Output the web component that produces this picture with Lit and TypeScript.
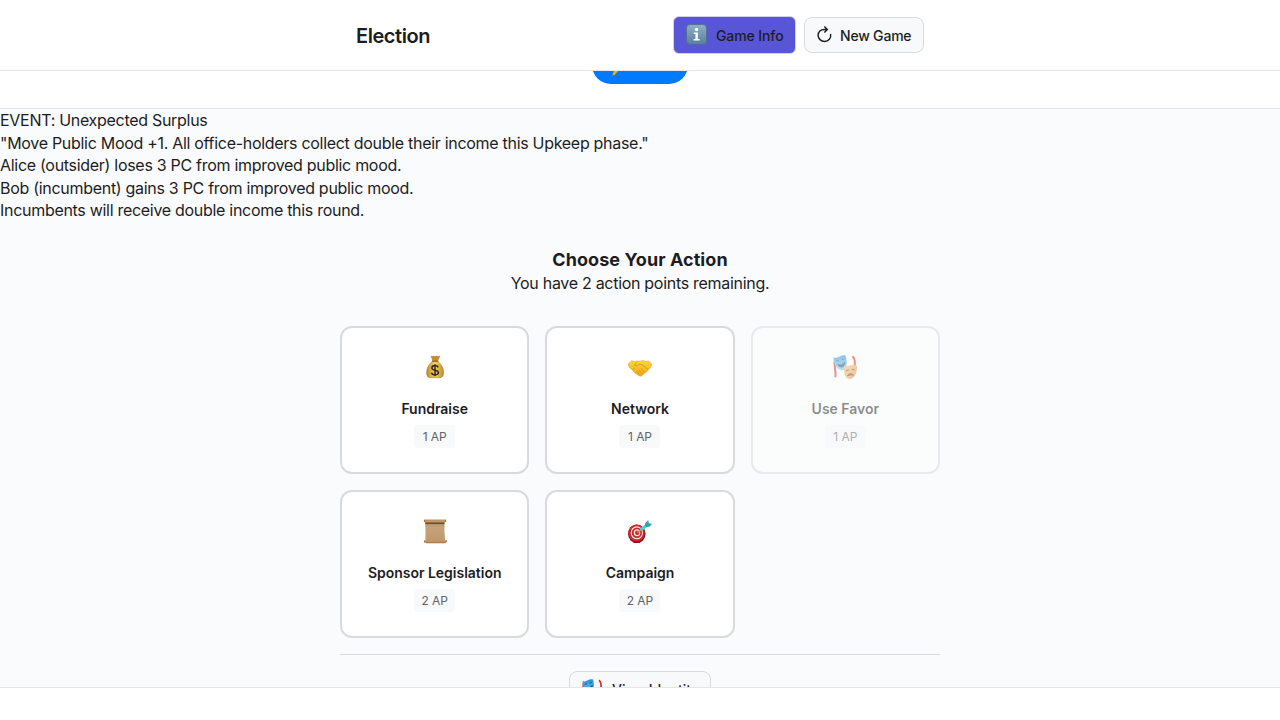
import { LitElement, html, css, svg, TemplateResult } from "lit";
import { customElement, property } from "lit/decorators.js";

const gradients = svg`<defs>
  <linearGradient id="gold" x1="0" x2="1"><stop offset="0" stop-color="#b98a26"/><stop offset=".5" stop-color="#f6d662"/><stop offset="1" stop-color="#bd8b2a"/></linearGradient>
  <linearGradient id="hand" x1="0" y1="0" x2="0" y2="1"><stop offset="0" stop-color="#ffd83a"/><stop offset="1" stop-color="#f0a818"/></linearGradient>
  <linearGradient id="mask1" x1="0" y1="0" x2="0" y2="1"><stop offset="0" stop-color="#1f8fdc"/><stop offset="1" stop-color="#7cc6ee"/></linearGradient>
  <linearGradient id="mask2" x1="0" y1="0" x2="1" y2="1"><stop offset="0" stop-color="#f8bd68"/><stop offset="1" stop-color="#d98a3c"/></linearGradient>
  <linearGradient id="paper" x1="0" y1="0" x2="0" y2="1"><stop offset="0" stop-color="#a98559"/><stop offset=".3" stop-color="#c5a278"/><stop offset="1" stop-color="#bf996c"/></linearGradient>
  <linearGradient id="info" x1="0" y1="0" x2="0" y2="1"><stop offset="0" stop-color="#8fb0c6"/><stop offset="1" stop-color="#587f9e"/></linearGradient>
</defs>`;

const icons: Record<string, TemplateResult> = {
  bag: svg`<path d="M7.6 .8Q9 1.8 10 .7Q12 1.6 13.5 .8Q15 1.7 17.4 .8L14.8 6.2H9.6Z" fill="#c4902f"/>
    <path d="M9.4 6.4H14.8C18.8 9.6 20.8 13.6 20.6 18.2C20.5 21.2 19 22.6 16.6 22.7H7.6C5 22.7 3.7 21.2 3.6 18.2C3.5 13.6 5.4 9.6 9.4 6.4Z" fill="url(#gold)" stroke="#9a6f22" stroke-width=".5"/>
    <path d="M9 6.2H15.3" stroke="#8a5e1a" stroke-width="1.1"/>
    <path d="M15.2 12.4C14.6 11 13.4 10.6 12 10.6C10.2 10.6 8.9 11.6 8.9 13C8.9 16.2 15.4 14.4 15.4 17.6C15.4 19 14 19.9 12.1 19.9C10.3 19.9 9 19.3 8.5 17.8M12 9.3V21.2" fill="none" stroke="#302b1e" stroke-width="1.5"/>`,
  hands: svg`<path d="M.2 9L3.7 5.6Q6.2 7.2 8.8 6L11.7 6.2L15.3 5.5Q18 7.2 20.7 6L23.8 9.2L22.3 12.7Q19.6 16.4 16.6 18.3L13.4 21Q12 21.5 10.7 20.4L7.2 18.2L4.2 14.8L1.3 12.6Z" fill="url(#hand)" stroke="#d99a17" stroke-width=".5"/>
    <path d="M8.8 6.8L6.6 10.3Q8.2 12 11.2 9.3L14 9.6L20 14.4M12.8 13L16.4 17M10.6 14.8L14 18.8M8.6 16.4L11 19.2M4.6 14.6L7 12.9" fill="none" stroke="#d08a10" stroke-width=".7"/>`,
  masks: svg`<path d="M1.9 4C.3 11 3.6 16 2.3 22.2" fill="none" stroke="#cf2f22" stroke-width="2"/>
    <path d="M19.6 1.2C23.6 5 20.7 9 22.3 14" fill="none" stroke="#cf2f22" stroke-width="2"/>
    <path d="M.8 2.2Q3 3.4 6 1.8Q10 -.4 12.6 .6C13.6 4.6 14.5 9 12.9 13Q10.8 16.6 7 14.9C3 13 .6 8 .8 2.2Z" fill="url(#mask1)"/>
    <path d="M3 6.2L5.7 5.4M8.8 4.8L11.4 3.8M4.6 9.4Q9 11.3 11.8 7.3Q11.6 11.8 8.5 12.1Q6 12.1 4.6 9.4Z" fill="#15557e" stroke="#15446b" stroke-width=".8"/>
    <path d="M11.1 11Q13.5 12 17 10.3Q21 9.1 23.9 10.9C24.1 16 22.9 20.6 19.7 23Q16.7 25.2 13.5 22.8C11.1 20 10.6 15.6 11.1 11Z" fill="url(#mask2)"/>
    <path d="M13 15.7L15.8 14.8M18.8 14.2L21.7 14.9M14.3 20.9Q17 16.8 20.3 20.1Q17.3 19.3 14.3 20.9Z" fill="#6f3d17" stroke="#6f3d17" stroke-width="1"/>`,
  scroll: svg`<path d="M2 2H21.6Q21 12 22.2 22.5H2.3Q3 12 2 2Z" fill="url(#paper)"/>
    <path d="M2.3 4.2H21.4" stroke="#674827" stroke-width="1.5"/><rect x="1" y=".4" width="21.8" height="2.9" rx=".8" fill="#bd9567"/>
    <rect x="1.2" y="21.4" width="22.2" height="2.4" rx=".8" fill="#c2935e"/><path d="M3 23.8H22.4" stroke="#76502b" stroke-width=".7"/>
    <path d="M1.4 .8V3M22.6 .8V3M1.6 21.5V23.5M23.2 21V23.3" stroke="#b8651e" stroke-width="1"/>`,
  target: svg`<ellipse cx="8.8" cy="14.8" rx="8.8" ry="9.3" fill="#8f1219"/><ellipse cx="8.5" cy="14" rx="8.2" ry="8.6" fill="#cf2631"/>
    <ellipse cx="8.8" cy="13.8" rx="6.2" ry="6.5" fill="#f3e7e4"/><ellipse cx="8.9" cy="13.8" rx="5.1" ry="5.3" fill="#ca2630"/>
    <ellipse cx="9" cy="13.8" rx="3.3" ry="3.5" fill="#f3e7e4"/><ellipse cx="9.2" cy="13.8" rx="2.1" ry="2.2" fill="#ca2630"/>
    <path d="M9.2 13.7L14 10" stroke="#c69b3c" stroke-width="1.5"/><path d="M12.7 11L19 6" stroke="#4fcbd6" stroke-width="3"/>
    <path d="M16.8 6.8L17.2 3.9L20.2 1L20.9 4.3L24.2 5.1L21.4 7.8L18.5 8.2Z" fill="#35a3ad"/>`,
  info: svg`<rect x=".5" y=".5" width="23" height="23" rx="4.4" fill="url(#info)" stroke="#4b6e87" stroke-width=".9"/>
    <circle cx="12" cy="6.4" r="2" fill="#fff"/><path d="M8.9 9.8H13.6V17.2H15.6V18.8H8.7V17.2H10.8V11.4H8.9Z" fill="#fff"/>`,
  redo: svg`<path d="M20.6 11.2C21.8 17 17.6 21.8 12.2 21.8C6.9 21.8 3 17.9 3 13.1C3 8.3 6.8 4.9 11.6 4.9H15.8M11.8 .7L16 4.9L11.8 9.3" fill="none" stroke="#1d1d1f" stroke-width="2"/>`,
  bolt: svg`<path d="M14.5 0L3.5 13H9.4L5 24.5L8 24L20.5 9.5H13Z" fill="#f5a623"/>`,
};

@customElement("game-icon")
export class GameIcon extends LitElement {
  @property() name = "";
  static styles = css`
    :host { display: block; width: 24px; height: 24px; flex: none; }
    svg { display: block; width: 100%; height: 100%; overflow: visible; }
  `;
  render() {
    return html`<svg viewBox="0 0 24 24">${gradients}${icons[this.name]}</svg>`;
  }
}

@customElement("action-card")
export class ActionCard extends LitElement {
  @property() icon = "";
  @property() label = "";
  @property({ type: Number }) cost = 1;
  static styles = css`
    :host { display: flex; flex-direction: column; align-items: center; box-sizing: border-box; height: 148px;
      padding-top: 27px; border: 2px solid #d9dade; border-radius: 12px; background: #fff; }
    :host([disabled]) { opacity: .5; background: #fdfffd; }
    .label { margin-top: 20px; font-size: 14px; line-height: 20px; font-weight: 600; letter-spacing: -.02px; white-space: nowrap; }
    .cost { box-sizing: border-box; width: 41px; margin-top: 6px; padding: 3px 0; border-radius: 4px; background: #f8f9fb;
      color: #636366; font-size: 12px; line-height: 17px; text-align: center; letter-spacing: -.05px; white-space: nowrap; }
  `;
  render() {
    return html`<game-icon name=${this.icon}></game-icon>
      <div class="label">${this.label}</div>
      <div class="cost">${this.cost} AP</div>`;
  }
}

@customElement("app-root")
export class AppRoot extends LitElement {
  private log = [
    "EVENT: Unexpected Surplus",
    "\"Move Public Mood +1. All office-holders collect double their income this Upkeep phase.\"",
    "Alice (outsider) loses 3 PC from improved public mood.",
    "Bob (incumbent) gains 3 PC from improved public mood.",
    "Incumbents will receive double income this round.",
  ];
  private actions = [
    { icon: "bag", label: "Fundraise", cost: 1 },
    { icon: "hands", label: "Network", cost: 1 },
    { icon: "masks", label: "Use Favor", cost: 1, disabled: true },
    { icon: "scroll", label: "Sponsor Legislation", cost: 2 },
    { icon: "target", label: "Campaign", cost: 2 },
  ];
  static styles = css`
    :host { display: flex; flex-direction: column; height: 720px; overflow: hidden; background: #fff; color: #1d1d1f;
      font: 16px/22.4px Inter, sans-serif; }
    header { box-sizing: border-box; height: 71px; flex: none; border-bottom: 1px solid #e5e5e7; }
    .bar { box-sizing: border-box; width: 600px; height: 70px; margin: 0 auto; padding: 0 16px; display: flex;
      align-items: center; justify-content: space-between; }
    h1 { margin: 0; padding-top: 2px; font-size: 20px; line-height: 28px; font-weight: 600; letter-spacing: -.45px; }
    .buttons { display: flex; gap: 8px; align-items: center; }
    .button { box-sizing: border-box; display: flex; align-items: center; height: 36px; padding: 2px 12px 0; gap: 8px;
      border: 1px solid #d9dade; border-radius: 8px; background: #f8f9fb; font-size: 14px; line-height: 20px;
      font-weight: 500; white-space: nowrap; }
    .info { width: 123px; height: 38px; padding: 1px 12px 0; gap: 9px; border-radius: 6px; background: #5856d6;
      border-color: #d2d2ee; letter-spacing: -.1px; }
    .info game-icon { width: 21px; height: 21px; margin-top: -3px; }
    .new { width: 120px; padding-left: 11px; letter-spacing: -.2px; gap: 7px; }
    .new game-icon { width: 17px; height: 17px; margin-top: -3px; }
    .phase { box-sizing: border-box; height: 38px; flex: none; overflow: hidden; display: flex; justify-content: center;
      align-items: flex-end; padding-bottom: 24px; border-bottom: 1px solid #e5e5e7; }
    .pill { box-sizing: border-box; width: 96px; height: 38px; flex: none; display: flex; padding: 0 16px; align-items: center;
      border-radius: 20px; background: #007aff; }
    .pill game-icon { width: 20px; height: 20px; }
    main { box-sizing: border-box; height: 579px; flex: none; overflow: hidden; background: #fafbfd; border-bottom: 1px solid #e5e5e7; }
    .log { line-height: 22.5px; }
    .log div { white-space: nowrap; }
    .log, .prompt { letter-spacing: -.295px; }
    .choose { width: 600px; margin: 25.5px auto 0; }
    .prompt { text-align: center; }
    h2 { margin: 0; font-size: 18px; line-height: 25.2px; font-weight: 700; letter-spacing: .08px; }
    .grid { display: grid; grid-template-columns: repeat(3, 1fr); gap: 16px; margin-top: 31px; }
    .more { display: flex; justify-content: center; margin-top: 16px; padding-top: 16px; border-top: 1px solid #d9dade; }
    .identity { width: 142px; gap: 9px; }
    .identity game-icon { width: 21px; height: 21px; }
  `;
  render() {
    return html`
      <header><div class="bar"><h1>Election</h1>
        <div class="buttons">
          <div class="button info"><game-icon name="info"></game-icon><span>Game Info</span></div>
          <div class="button new"><game-icon name="redo"></game-icon><span>New Game</span></div>
        </div></div></header>
      <section class="phase"><div class="pill"><game-icon name="bolt"></game-icon></div></section>
      <main>
        <div class="log">${this.log.map((line) => html`<div>${line}</div>`)}</div>
        <div class="choose">
          <div class="prompt"><h2>Choose Your Action</h2><div>You have 2 action points remaining.</div></div>
          <div class="grid">${this.actions.map((a) => html`<action-card icon=${a.icon} label=${a.label}
            .cost=${a.cost} ?disabled=${a.disabled}></action-card>`)}</div>
          <div class="more"><div class="button identity"><game-icon name="masks"></game-icon><span>View Identity</span></div></div>
        </div>
      </main>`;
  }
}
